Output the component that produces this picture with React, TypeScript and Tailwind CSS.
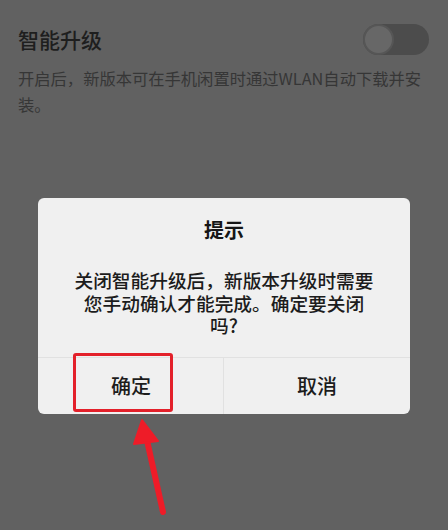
import React from 'react';

const font = { fontFamily: '"Noto Sans CJK SC", "Noto Sans", sans-serif' };

export default function App() {
    return (
        <div className="relative w-[448px] h-[530px] overflow-hidden bg-[#616161]" style={font}>
            {/* Setting row */}
            <div className="px-[18px] pt-[21px]">
                <div className="flex items-center justify-between">
                    <span className="text-[21px] leading-[36px] font-medium text-[#1e1e1e]">智能升级</span>
                    <div className="w-[66px] h-[31px] rounded-full bg-[#4c4c4c] flex items-center mr-[1px]">
                        <div className="w-[31px] h-[31px] rounded-full bg-[#676767] border-2 border-[#565656]" />
                    </div>
                </div>
                <p className="mt-[8px] text-[16.3px] leading-[26px] text-[#363636]">
                    开启后，新版本可在手机闲置时通过WLAN自动下载并安装。
                </p>
            </div>

            {/* Dialog */}
            <div className="absolute left-[38px] top-[198px] w-[372px] rounded-[6px] bg-[#f0f0f0]">
                <div className="pt-[17px] text-center text-[20px] leading-[30px] font-bold text-[#161616]">提示</div>
                <p className="mt-[24px] px-[33px] text-center text-[18.7px] leading-[22.5px] font-medium text-[#1c1c1c]">
                    关闭智能升级后，新版本升级时需要您手动确认才能完成。确定要关闭吗?
                </p>
                <div className="mt-[20px] flex border-t border-[#e1e1e1] h-[57px]">
                    <div className="flex-1 flex items-center justify-center text-[20px] font-medium text-[#1c1c1c] pl-[1px]">确定</div>
                    <div className="w-px bg-[#e1e1e1]" />
                    <div className="w-[186px] flex items-center justify-center text-[20px] font-medium text-[#1c1c1c]">取消</div>
                </div>
                {/* highlight box */}
                <div className="absolute left-[35px] top-[155px] w-[100px] h-[59px] border-[3px] border-[#e3202a] rounded-[3px]" />
            </div>

            {/* Arrow annotation */}
            <svg className="absolute left-0 top-0" width="448" height="530" viewBox="0 0 448 530">
                <line x1="163" y1="512" x2="146" y2="436" stroke="#ee1c28" strokeWidth="6" strokeLinecap="round" />
                <polygon points="142,420 134,444 158,441" fill="#ee1c28" stroke="#ee1c28" strokeWidth="2" strokeLinejoin="round" />
            </svg>
        </div>
    );
}
